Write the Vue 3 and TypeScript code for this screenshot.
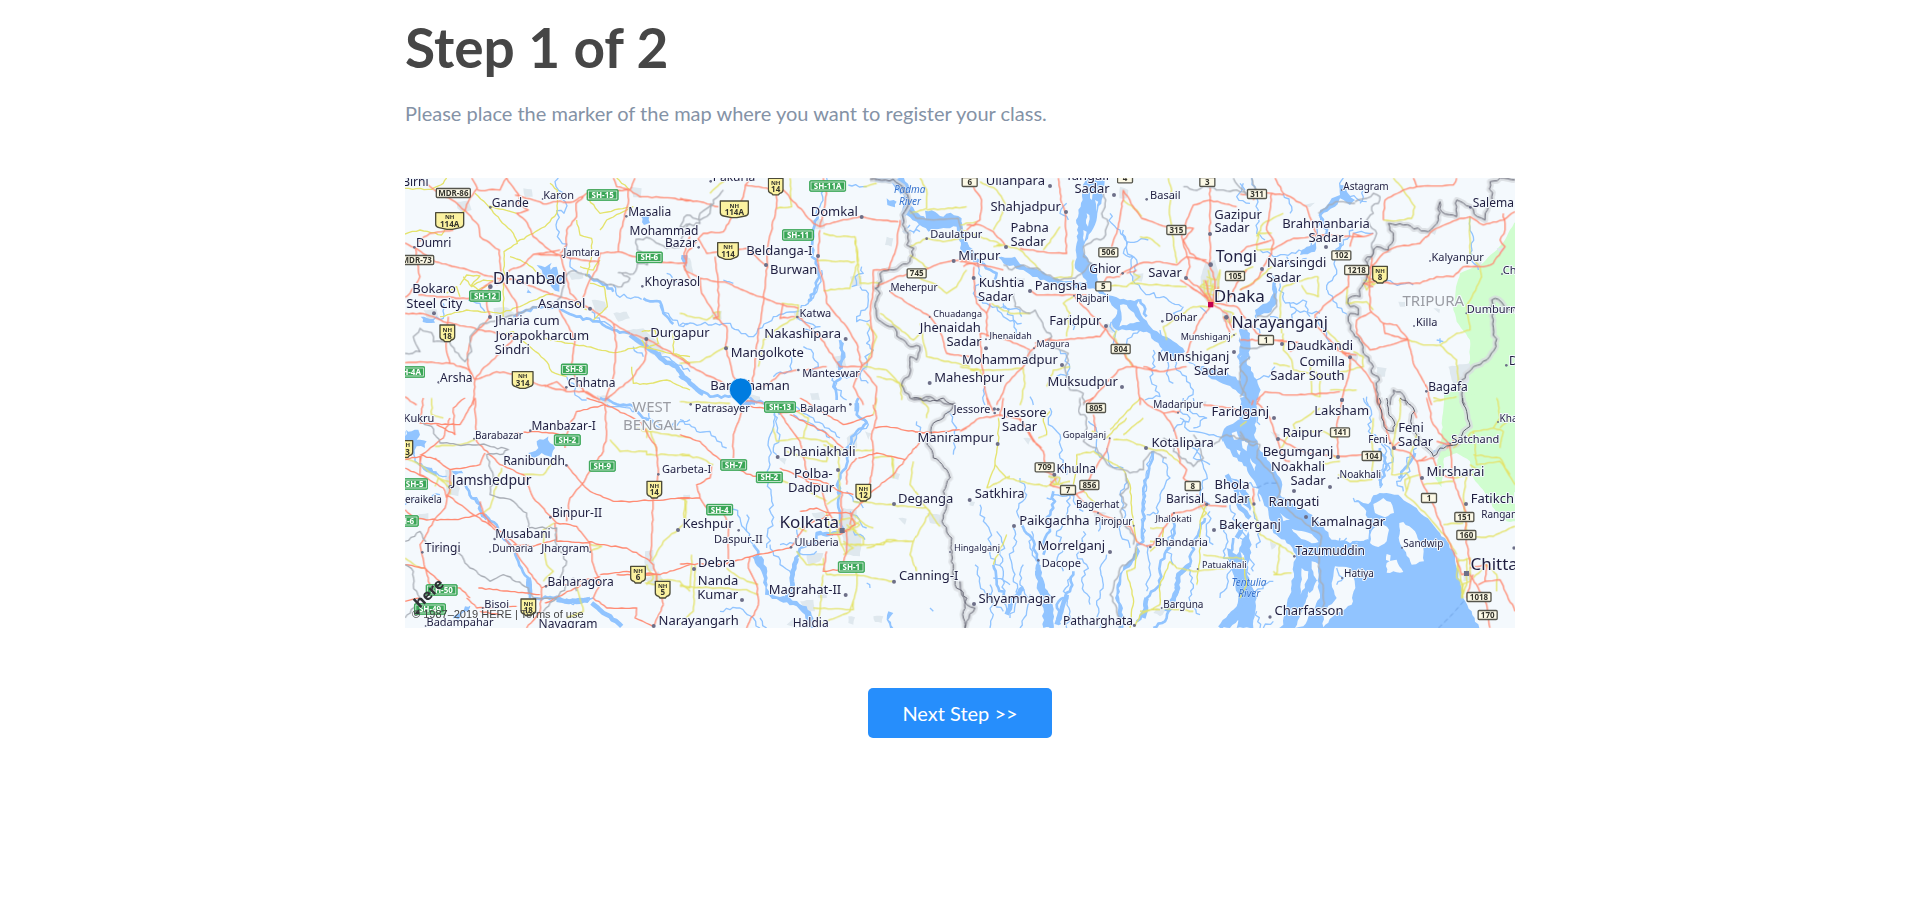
<script setup lang="ts">
type Label = [text: string, x: number, y: number, size: number, tone?: string]
type Shield = [kind: 'sh' | 'nh' | 'bx', text: string, x: number, y: number]

interface Tile {
  x: number
  y: number
  layers: Record<string, string>
  labels: Label[]
  shields: Shield[]
  dots: string
}

/* Three map units per screen pixel; lines are "x y x y ..." separated by "/". */
const tiles: Tile[] = [
  {
    x: -15,
    y: -24,
    layers: {
      urban:
        '170 95 205 92 215 120 190 130 172 115/370 55 395 58 398 80 375 82/280 415 320 412 345 430 320 450 285 445/680 480 730 475 780 520 795 550 760 555 710 520/505 310 545 305 550 325 515 330/575 390 615 395 620 420 590 430/640 430 680 425 690 445 655 455/690 50 725 55 725 85 700 82/70 420 110 418 118 445 85 448/590 675 630 678 630 700 595 698',
      water:
        '410 285 435 292 455 278 452 300 470 290 475 312 495 318 480 335 478 365 455 352 448 330 428 322 425 300/722 138 745 130 750 158 732 165/62 440 100 448 105 458 68 456/845 255 862 255 860 290 850 280/380 350 395 370 380 368',
      r1: '475 24 468 50 488 68 472 80 496 95 492 130 470 122 478 142 468 165 480 210 500 222 510 290 530 305/640 345 650 375 725 388/800 310 830 335/780 405 818 450 850 470 870 460/205 390 240 400 255 425/500 620 520 640 525 675 560 690/90 450 130 445 130 400/700 530 730 560/760 540 870 605/575 425 600 455 640 475',
      r2: '340 440 370 425 410 412 480 415 530 440 600 455 640 480 690 490/730 385 780 395 790 430 820 462/555 315 620 345 640 365',
      r3: '690 495 740 530 790 570 830 590 850 620 870 635',
      yellow:
        '15 55 95 58 130 40 140 24/225 70 268 112 300 150 340 190 352 220 312 245 310 440/268 108 350 130/560 80 600 130 690 110/530 150 540 195 575 205 575 260 560 320/352 215 400 190 435 170 470 130 472 60 450 40/15 192 60 180 125 195 150 160 195 122/120 440 200 420 300 430 360 410 420 382 460 370/180 345 200 315 240 318 215 345 235 360 262 345/190 320 215 350 250 330 285 335/300 495 340 485 390 530 440 575 455 605 500 620/430 505 560 530 640 548 720 530 810 550 870 560/570 340 612 350 622 410 580 450/725 485 765 480 775 520 740 535 725 510/695 590 700 640 740 642 800 630 870 660/330 260 380 280 440 330/820 490 820 550 840 560 870 580/650 24 690 60/540 290 580 300 600 270/140 370 170 350 180 380/700 110 620 150 600 180/530 400 560 420',
      red: '15 219 46 233 105 275 200 298 285 324 345 328 400 350 450 372 500 385 570 415 640 460 690 490 740 507 800 540 870 582/215 24 232 55 205 95 195 122 235 165 240 200 298 240 305 330 330 370 350 400 350 440/55 24 110 65 165 95 195 122/232 60 300 60 320 24 345 60 360 80 355 100 385 120 350 130 375 150 400 200 455 245 480 255/345 75 400 90 430 102 470 95 520 95 575 60 620 65 690 60 720 80 780 82 870 92/685 60 685 100 660 190 655 245/655 245 720 265 800 278 860 280/655 245 600 250 590 300 565 340 545 400/480 255 510 265 595 275/480 250 500 225 500 180 530 140 528 100 550 80/480 255 400 253 370 285 330 300 308 325 290 345/46 233 48 260 60 320 30 370 15 382/15 430 60 430 100 440 130 455 200 470 290 490 340 500/55 375 180 385 210 385 260 345 285 330/270 350 260 400 270 440 245 470 215 500 202 550 205 590 225 630 220 705/15 578 60 575 150 580 200 595 225 628 290 605 340 612 405 640 500 665 560 665 600 690/350 500 300 550 245 600 225 630/145 440 142 500 138 530 150 580/478 420 500 460 525 510 515 580 530 640 560 670 600 690/480 255 490 290 505 340 510 370 540 400 570 415/640 460 650 530 640 620 615 695/740 507 735 570 700 620 620 688/15 680 50 705/860 280 852 250 870 200/850 285 870 330/435 650 470 635 500 660/640 24 650 50 690 60 705 24/160 180 90 190 55 215/480 240 430 250 400 253',
      state: '15 550 60 545 40 500 60 475 95 488 100 515 148 515 165 545 195 575 215 545 210 500 240 465 270 455 345 435 400 410 470 400 485 370 500 315 525 302 560 315 620 345 665 350 690 325 655 308 700 312 712 280 742 285 738 260 712 240 708 208 750 205 800 235 845 230 850 195 870 160',
    },
    labels: [
      ['Birni', 46, 47, 36], ['Gande', 331, 110, 36], ['Karon', 476, 87, 33], ['Masalia', 749, 137, 36],
      ['Mohammad', 792, 194, 36], ['Bazar', 843, 230, 36], ['Jamtara', 545, 257, 30], ['Dumri', 101, 231, 36],
      ['Dhanbad', 388, 343, 51], ['Bokaro', 102, 370, 39], ['Steel City', 103, 413, 39], ['Asansol', 485, 413, 39],
      ['Jharia cum', 382, 466, 39], ['Jorapokharcum', 427, 509, 39], ['Sindri', 337, 551, 39],
      ['Khoyrasol', 817, 347, 36], ['Durgapur', 840, 502, 39], ['Arsha', 169, 635, 36], ['Chhatna', 575, 650, 36],
    ],
    shields: [
      ['bx', 'MDR-86', 160, 69], ['nh', '114A', 149, 153], ['sh', 'SH-15', 608, 75], ['sh', 'SH-6', 748, 262],
      ['bx', 'MDR-73', 50, 270], ['sh', 'SH-12', 255, 378], ['nh', '18', 142, 490], ['sh', 'SH-4A', 28, 606],
      ['nh', '314', 368, 630], ['sh', 'SH-8', 523, 598],
    ],
    dots: '271 112 4/428 87 3/679 139 4/487 258 3/43 232 4/271 350 7/102 430 6/570 416 6/270 441 6/727 349 4/739 507 6/116 637 4/499 652 4/896 232 4',
  },
  {
    x: 825,
    y: -24,
    layers: {
      urban:
        '395 150 430 148 435 175 405 178/95 425 125 422 125 448 98 450/340 425 365 415 385 440 350 450/460 560 490 555 500 590 470 595/200 670 240 680 240 700 200 700/390 670 415 668 420 690 395 690/10 260 30 265 40 310 10 300/510 320 545 318 545 350 515 345/540 575 565 580 560 600 545 600/620 200 640 205 635 230 615 225',
      water:
        '590 24 672 24 688 50 690 105 715 130 738 148 735 122 765 125 790 140 812 128 845 145 848 180 870 235 840 215 830 170 770 178 745 185 710 155 680 135 665 165 663 130 678 95 660 65 650 35/620 85 650 95 645 112 622 105/470 575 490 570 490 595 475 600/480 510 492 520 490 570 482 570/5 255 22 258 20 290 8 275/185 690 225 690 225 705 185 705',
      r1: '440 24 432 60 420 110 412 150/425 300 415 345 385 400 350 425 280 440 230 490 220 500 175 480 140 460 85 465 40 460 0 465/545 290 550 310 525 320 530 345 515 350/540 350 565 370 555 420 530 440 530 455 570 450/570 470 560 520 580 540 555 560 560 590 540 620 565 640/370 530 400 550 415 590 395 610/350 440 420 470 360 490/510 620 460 610 465 650 500 690/330 555 335 600 280 620/130 330 160 340/505 45 560 50/690 165 670 185 720 185/740 150 700 190',
      r2: '412 120 400 200 398 250 415 310 410 350 385 395/0 610 40 650 90 680 180 682/480 510 492 550 480 590 485 620 460 650 470 690',
      r3: '585 28 640 32 668 70/0 615 30 640 70 672',
      yellow:
        '145 24 105 55 90 70/330 24 335 110 290 115/430 190 470 200 525 200 535 270 510 355 430 362/412 272 525 275/525 210 540 340 600 340/690 130 740 115 740 60 720 24/740 120 860 110/690 230 740 205 790 215 870 200/600 430 650 470 700 510 720 490/705 320 760 340 800 370 830 350 860 300/720 460 740 560 870 590/100 435 80 450 0 430/305 400 355 405 350 440 300 470 250 510 235 590/0 580 60 575 120 540 145 530/550 590 620 600 660 640 665 690/590 620 640 630 670 650/0 695 150 700/100 430 120 425 118 445 100 445/550 50 590 40/690 255 745 295/560 460 590 500 560 580',
      red: '0 85 60 95 115 110/205 24 185 90 150 150 130 185 70 190 20 250 15 300 60 325 145 340 210 370 310 405 355 415/195 45 290 60 310 60 400 160 420 170 470 155 540 140 600 150 655 155/290 60 290 110 265 220 262 280 250 400 235 490 225 580 215 660 185 705/55 205 80 250 200 235 262 290/105 260 115 350 115 440 100 445/60 325 65 370 110 445 140 470 138 535 160 620 180 650/420 180 412 270 440 380 440 400 500 470 530 520 545 590 520 650 550 705/355 440 420 500 480 590 545 590/370 600 440 590/225 660 270 640 300 610 350 600/0 565 50 600 130 640 180 690 250 700/660 150 650 230 625 300 580 300 580 360 570 430 580 500 575 560 545 590/590 350 650 320 710 310 780 280 820 270 870 270/630 365 700 410 750 440 780 480 800 550 870 560/550 600 590 650 585 705/430 24 440 70 420 170/310 400 300 445 345 440',
      state: '130 60 100 90 90 130 60 150 20 135 0 170/0 170 60 160 60 130 95 100',
      border:
        '570 28 640 28 668 50 685 85 680 115 667 135 668 165 685 190 680 225 702 235 690 275 640 300 600 310 605 335 585 355 600 370 585 410 590 440 610 460 640 470 660 505 690 530 720 530 710 570 690 560 690 610 665 645 690 685 750 680 790 700 825 700',
      statew: '688 120 710 145 760 150 835 145 845 180',
    },
    labels: [
      ['Pakuria', 162, 33, 36], ['Padma', 689, 70, 30, 'river'], ['River', 690, 104, 30, 'river'], ['Domkal', 463, 137, 39],
      ['Beldanga-I', 298, 254, 39], ['Burwan', 341, 311, 39], ['Meherpur', 702, 363, 30], ['Daulatpur', 829, 204, 33],
      ['Katwa', 406, 440, 33], ['Chuadanga', 833, 440, 27], ['Jhenaidah', 811, 487, 39], ['Sadar', 852, 529, 39],
      ['Nakashipara', 368, 503, 39], ['Mangolkote', 262, 561, 39], ['Manteswar', 453, 620, 33], ['Barddhaman', 210, 661, 39],
      ['Maheshpur', 868, 636, 39],
    ],
    shields: [
      ['nh', '14', 287, 50], ['nh', '114A', 163, 118], ['sh', 'SH-11A', 443, 48], ['sh', 'SH-11', 354, 195],
      ['nh', '114', 144, 243], ['bx', '745', 710, 310],
    ],
    dots: '92 34 4/545 141 6/414 258 6/258 285 6/740 206 4/821 273 6/630 363 3/749 441 3/352 441 4/497 507 6/138 535 6/355 600 4/749 639 6',
  },
  {
    x: 1665,
    y: -24,
    layers: {
      urban:
        '735 280 765 270 780 330 775 400 745 400 720 370 722 320/785 420 815 425 815 460 790 455/480 50 505 60 500 85 478 85/160 325 195 325 192 345 165 345/520 310 550 310 545 335 520 330/440 460 465 462 460 490 440 485/200 540 220 545 225 575 205 570',
      water:
        '372 24 432 24 425 90 412 130 400 175 372 225 372 250 408 300 412 340 440 380 400 355 378 330 365 310 345 295 348 230 355 190 348 150 368 90/0 150 15 200 50 265 75 272 40 275 0 235/115 262 165 260 180 282 240 302 300 330 390 340 400 355 330 352 240 330 190 300 130 280/435 370 480 388 545 390 530 405 550 445 580 480 650 520 675 545 640 560 600 530 560 485 510 480 475 482 455 460 472 420 450 395/500 400 525 420 545 455 560 470 535 462 512 435/680 570 740 595 790 600 870 650 870 690 800 645 745 620/850 480 870 490 870 570 850 560',
      land: '392 60 400 65 396 90 390 85/380 130 388 135 384 170 378 160/405 90 415 95 408 125/480 405 500 405 540 455 510 460 478 470 485 440/370 180 380 185 372 215',
      r1: '450 130 455 160 480 180 500 215 565 210/500 215 490 250 520 260 510 300 525 340 550 365 620 385 665 410/470 440 450 470 465 500 460 520/340 480 330 440/50 270 65 330 40 370 80 400 110 410 130 440 185 460/130 400 160 450 175 500/540 480 520 490 490 540/600 480 625 530 600 550/580 540 585 590 570 620 600 680 555 690/640 560 650 600 690 640 700 660 680 690/300 540 320 560 325 620 290 620/210 680 220 705/870 560 840 580 860 610/490 180 500 240 530 270 520 310/110 410 180 420 185 440/75 650 75 705/320 100 300 130 325 150/850 40 830 80 870 100/670 410 640 430 670 450/720 410 740 430/620 570 625 620 640 640',
      r2: '60 280 110 310 100 340/540 388 560 440/850 600 835 560 860 520 860 480',
      yellow:
        '60 35 110 60 135 100 120 150 100 180/0 180 60 200 130 225 180 240 240 300/300 170 280 200 250 240/340 270 335 320 280 325/490 90 530 120 545 140/625 24 635 60 628 120 650 280/340 380 310 400 330 430 320 500/430 345 500 350 540 320 520 310/510 340 600 345 680 350/740 320 770 330 780 300 770 400 740 380 745 330 720 350 760 360/730 330 735 380 765 400 760 340/745 300 755 350 745 395/728 345 765 350 770 380 735 370/470 480 460 500 520 590/750 410 700 410 610 470 620 510/740 540 800 510 830 490/30 600 110 600 190 595 195 640 180 705/260 650 280 600 330 590/0 590 60 600 80 640/95 400 150 430 210 430/100 230 130 225 110 225/0 165 50 155/790 420 820 430 810 460 790 440/540 200 570 205 600 230',
      red: '40 50 65 90 60 150 20 180/20 165 60 165 100 185 135 225/295 24 305 100 315 125 320 250 240 245 180 235/490 60 490 80 480 140 470 190 455 230/490 60 520 110 545 145 620 170 700 175 670 210 690 250 750 285/750 50 750 190 750 285 765 330 760 400/830 110 750 90 700 105 680 150 665 200 680 250 690 290 678 325 720 355 750 400/480 315 540 280 600 275 650 285/650 285 680 260 740 270/0 275 50 280 130 300/42 290 42 330 50 400 80 430 90 400/210 360 230 375 340 375 380 375/345 380 370 410 400 440 440 480 520 590 600 605/440 470 420 500 300 510 250 510 210 545 190 590 140 640 110 705/80 500 80 430/60 490 140 510 210 540/225 520 275 505/60 490 65 580 75 660 85 705/750 410 720 450 690 520 678 555/760 405 800 430 820 480/770 400 830 410 860 450/500 590 530 590 540 705/380 705 420 660 475 600 500 590/550 590 600 605 680 590/660 330 720 370/60 290 30 280 10 290/790 440 810 490/500 310 530 300/430 340 440 322 480 320/690 350 735 380 760 405/735 330 745 370 758 400/775 350 765 400/725 360 745 385/860 300 830 340 800 400',
      state:
        '130 285 155 300 190 285 240 300 290 330 345 325 395 280 370 260 370 230 400 210 430 205 445 160 425 130 435 100 430 70/160 370 165 410 210 430 225 420 250 470 275 500 260 520 300 540 325 550 315 600 320 615 330 660 370 670 370 705/670 50 700 60 740 50 780 60 830 60 870 80/870 560 840 590 840 640 870 700/820 24 850 60 870 70',
    },
    labels: [
      ['Ullahpara', 166, 44, 39], ['Tangail', 382, 30, 39], ['Sadar', 396, 70, 39], ['Shahjadpur', 197, 122, 39],
      ['Pabna', 209, 185, 39], ['Sadar', 204, 227, 39], ['Basail', 616, 86, 33], ['Gazipur', 834, 147, 39],
      ['Sadar', 816, 187, 39], ['Tongi', 829, 276, 48], ['Ghior', 435, 309, 36], ['Savar', 615, 320, 39],
      ['Mirpur', 58, 270, 39], ['Kushtia', 125, 350, 39], ['Sadar', 107, 392, 39], ['Pangsha', 303, 360, 39],
      ['Rajbari', 397, 395, 30], ['Dhaka', 838, 397, 51], ['Faridpur', 346, 465, 39], ['Dohar', 664, 453, 33],
      ['Munshiganj', 737, 510, 27], ['Jhenaidah', 152, 506, 27], ['Magura', 279, 532, 27], ['Mohammadpur', 150, 582, 39],
      ['Munshiganj', 700, 573, 39], ['Sadar', 755, 615, 39], ['Muksudpur', 368, 648, 39],
    ],
    shields: [
      ['bx', '6', 29, 36], ['bx', '4', 495, 25], ['bx', '3', 742, 36], ['bx', '315', 649, 180], ['bx', '506', 445, 247],
      ['bx', '5', 430, 349], ['bx', '105', 825, 318], ['bx', '804', 482, 537],
    ],
    dots: '270 48 6/462 75 6/318 126 6/138 231 6/560 88 4/750 192 6/752 284 7/488 310 4/678 324 6/41 324 6/210 363 6/342 377 3/438 468 6/607 454 4/799 442 7/822 546 6/822 495 3/78 508 3/78 535 6/222 535 3/306 585 6/486 651 6',
  },
  {
    x: 2505,
    y: -24,
    layers: {
      green:
        '840 130 800 200 770 240 720 285 660 310 648 350 640 420 650 455 690 510 690 570 650 640 620 680 612 720 840 720',
      urban:
        '360 320 395 325 395 355 365 350/475 395 500 395 500 410 480 410/625 590 690 580 685 640 640 640/410 590 440 595 435 620 412 618/580 415 600 418 598 430/700 280 725 275 720 300/330 550 355 550 350 575 330 570/770 235 795 230 785 250/565 180 590 180 585 195/190 105 225 98 210 112',
      water:
        '300 45 320 50 325 75 345 90 330 105 300 85 285 110 262 125 235 138 240 120 262 105 275 85 300 75/95 310 110 325 110 400 85 430 50 440 45 420 80 400 100 370/0 470 15 480 22 530 15 565 40 610 62 660 50 705 20 705 10 640 0 620/200 230 228 215 225 245 180 255 185 240/0 500 10 520 0 560',
      r1: '130 70 155 110 150 130/35 24 45 50 55 120 50 190 75 210/310 24 300 50 330 80 380 95/60 240 100 260 200 240 230 200 240 130/140 260 150 285 200 265/340 190 400 190/340 180 310 210 285 250 290 300 260 360/120 340 130 390 170 420 240 430/150 400 200 395 210 440/262 360 290 400 325 440/230 440 260 490 280 540/50 630 95 610 105 590/690 140 700 200 690 250 715 300/400 330 460 340 520 345/370 60 360 100/60 420 45 460 60 490/590 510 610 515/600 505 600 520/380 680 385 705/0 40 15 60/90 440 140 460 170 420',
      r2: '0 480 15 540 10 600 40 650 40 705/240 130 260 190 240 200/105 330 105 390 60 425/300 215 290 260',
      yellow:
        '460 24 490 60 525 110 515 145 470 152 430 150/95 190 55 190 50 240 100 235/50 200 70 160 130 130/235 320 205 325 130 350 120 380 120 440 125 490/235 320 235 380 200 370 185 345/690 140 690 250 720 290 725 320 700 370 680 410 690 480 650 490 600 525 550 525 505 510/600 525 650 570 655 640 670 660/130 490 130 540 155 570 160 600 210 610/210 570 215 670 240 680 240 620 220 600/240 620 330 600 330 580/260 480 300 520 310 550/370 330 400 340 380 360 370 340/380 310 400 345 420 330/320 350 320 400 380 395 400 420/580 695 650 680/0 360 50 330 95 290/340 545 370 560 370 590 330 600/270 660 350 660/390 320 385 345/0 310 40 290/150 590 100 580',
      red: '105 24 130 70 200 110 230 200 260 200/0 72 50 72 95 70 130 75/95 70 90 120 80 180 100 210 95 250 70 290/95 240 160 205 240 195 370 200 400 190/370 200 340 190 330 230/430 150 435 90 490 60 530 50 640 45 650 24/530 50 520 24/400 330 380 320 385 300 430 250 470 230 540 220 580 180 660 145 690 140 730 165 790 150 825 125/790 130 795 180 780 210 795 230 760 280/400 330 450 340 540 340 590 320 640 320 670 290 730 290 760 280/395 260 388 350 390 420 430 460 435 490 505 510/395 425 350 450 350 490 390 540 430 530 505 510/430 460 470 465 505 510 520 580 560 650 575 705/70 300 40 340 0 360/325 300 325 350 260 400 225 435 230 470 310 550 330 560/0 510 60 510 130 510/330 560 330 600 305 690/330 560 370 600 400 640 415 705/50 690 75 665 150 675 260 670 300 665/310 550 350 555/0 250 20 230 95 210/105 510 180 520 150 545/30 460 50 490 90 510/400 350 370 340 430 330/40 690 35 705/290 540 330 550/40 90 50 72',
      state:
        '35 24 50 60 20 60/235 130 265 105 300 95 345 100/345 95 380 85 400 70 420 80 415 100 395 110 400 130 380 150 410 190 395 220 400 250 380 280/20 480 0 470/0 600 20 620 10 660 0 680/50 440 80 440 110 410 105 370/0 530 40 535 90 520',
      border:
        '825 30 780 24 750 35 755 80 745 110 735 150 712 140 690 110 650 90 650 140 605 125 600 95 595 150 565 185 490 165 445 160 460 200 445 240 410 230 400 250 375 270 385 310 365 350 360 380 325 385 330 410 355 415 355 435 330 430 325 455 345 500 365 520 370 550 395 580 395 610 415 620 410 650 415 705/450 705 460 660 490 675 500 705/675 705 660 640 700 590 740 570 768 530 760 450 755 390 775 388 795 420 825 425',
    },
    labels: [
      ['Astagram', 378, 60, 30], ['Salema', 760, 111, 36], ['Brahmanbaria', 258, 174, 39], ['Sadar', 258, 216, 39],
      ['Kalyanpur', 653, 273, 33], ['Narsingdi', 170, 292, 39], ['Sadar', 131, 336, 39], ['Char', 825, 312, 33],
      ['TRIPURA', 580, 409, 45, 'region'], ['Dumburnagar', 791, 430, 33], ['Killa', 560, 468, 33],
      ['Narayanganj', 119, 473, 48], ['Daudkandi', 240, 540, 39], ['Comilla', 247, 587, 39], ['Sadar South', 202, 629, 39],
      ['Bagafa', 624, 663, 36], ['D', 820, 586, 36],
    ],
    shields: [
      ['bx', '311', 51, 72], ['bx', '102', 304, 256], ['bx', '1218', 350, 300], ['nh', '8', 420, 314], ['bx', '1', 78, 510],
    ],
    dots: '306 60 3/691 112 4/258 231 6/570 273 3/66 297 6/786 312 3/679 430 3/522 468 3/126 522 6/330 562 6/559 664 4/799 586 4/306 690 6',
  },
  {
    x: -15,
    y: 660,
    layers: {
      urban:
        '135 215 160 215 160 250 180 270 175 295 140 290/735 460 760 455 765 520 735 515/850 290 870 290 870 305 850 305/55 348 85 345 85 365 58 365/730 545 775 520 790 545 760 560',
      water:
        '18 95 35 100 55 95 60 110 50 125 80 130 75 150 50 145 45 170 35 160 15 155/410 130 430 125 445 115 450 135 465 150 455 178 425 165 400 180 385 165 415 150/155 220 185 218 190 226 165 232/195 625 210 628 205 640 190 640/160 655 185 650 175 665/40 185 60 200 110 220 110 235 70 215',
      r1: '15 100 45 190 110 225 140 235/190 250 210 290 235 310 240 340/620 20 690 30 740 60 790 90 870 65/15 320 60 300 120 290/430 600 480 600 520 620 580 600/160 660 190 640 210 625/740 30 760 80 790 95 830 70',
      r2: '190 250 215 300 240 320 245 350 290 380 290 400 330 440 350 480 385 540 390 600/400 600 460 600 490 610 530 605 570 600/600 0 640 15 690 20 720 50 760 70',
      r3: '245 350 262 362/470 605 530 612 565 605/385 540 390 590/575 615 620 650 665 685',
      yellow:
        '105 145 180 140 225 125/95 0 95 50 130 60/15 180 60 200 110 235 150 270/105 265 115 240 155 255 150 290/630 125 660 160 740 160 740 170 870 170/305 210 290 260 270 330 250 345/365 230 430 230 460 190/750 95 770 160/15 480 50 505 75 510/465 375 430 395 430 440 440 500 460 520 430 550/855 300 850 380 790 430 755 490/570 460 605 445 570 440/735 530 770 530 770 560 735 555/780 545 840 550 870 580/500 660 550 640 530 560/740 90 740 120/740 500 760 540 740 560/710 90 740 100 870 120',
      red: '70 0 60 75 180 80 225 0 230 130 300 200 370 230 400 300 470 375/110 80 165 110 160 30 195 0/60 200 65 170 130 120 150 60/15 185 60 175 60 230 130 270 140 300/150 215 190 210 240 200 255 165/105 180 150 215 150 260/150 270 135 330 100 370 60 440 75 510 120 550/15 335 40 360 90 365 175 365 250 345/140 290 220 350 275 385 330 440 350 465 400 540 425 570 420 640 380 690/240 310 250 350 300 400 350 440/615 20 530 40 505 90 495 150/500 200 540 250 570 280 640 310 700 310 870 300/615 20 620 110 610 160 545 260 510 300 500 370/560 0 615 20 720 70 770 150 775 225 760 300 755 420 750 490/330 110 395 100 500 110/470 375 530 385 565 430 600 440 680 450 745 485/465 375 470 430 570 435 580 500 600 560 580 600 620 630 710 630 705 660 760 685/600 530 680 520 780 530 870 500/340 440 400 445 470 425/425 570 450 560 500 560 600 535/435 615 600 535/15 210 80 240/200 600 230 630 350 625/75 510 90 560 180 570 210 600/275 385 250 345/60 600 15 610/745 485 760 500 790 620/120 190 60 170/650 530 780 530/235 570 420 590/300 650 240 640/75 510 15 500/760 685 790 620',
      state:
        '15 60 95 85 120 135 170 140 240 140 325 155 300 170 260 170 280 235 270 290 340 310 380 345 385 390 470 390 465 430 500 490 480 540/15 430 60 400 80 440 170 460 210 510 270 550 310 530 385 570 400 600 440 600/15 500 40 520 40 560 60 600 15 660/530 580 520 540 470 600/440 600 470 600 430 640',
    },
    labels: [
      ['Kukru', 57, 72, 33], ['Barabazar', 297, 122, 30], ['Manbazar-I', 491, 95, 36], ['Ranibundh', 402, 200, 36],
      ['WEST', 755, 43, 45, 'region'], ['BENGAL', 756, 95, 45, 'region'], ['Garbeta-I', 860, 226, 33],
      ['Jamshedpur', 275, 262, 42], ['Seraikela', 62, 316, 30], ['Binpur-II', 531, 356, 36], ['Musabani', 369, 421, 36],
      ['Dumaria', 338, 462, 30], ['Jhargram', 496, 462, 33], ['Tiringi', 128, 462, 36], ['Bisoi', 290, 629, 33],
      ['Baharagora', 542, 563, 36], ['Badampahar', 180, 683, 33], ['Nayagram', 504, 690, 36], ['Narayangarh', 896, 680, 39],
    ],
    shields: [
      ['sh', 'SH-2', 502, 126], ['nh', '33', 16, 153], ['sh', 'SH-9', 607, 204], ['sh', 'SH-5', 44, 258],
      ['nh', '14', 763, 275], ['sh', 'SH-6', 16, 369], ['sh', 'SH-50', 125, 576], ['sh', 'SH-49', 90, 633],
      ['nh', '6', 714, 530], ['nh', '5', 788, 575], ['nh', '18', 385, 628],
    ],
    dots: '222 122 3/391 98 4/499 202 4/775 229 4/151 267 6/451 358 4/284 423 4/270 462 3/570 462 3/67 463 4/248 630 3/438 565 4/77 684 3/761 684 6',
  },
  {
    x: 825,
    y: 660,
    layers: {
      urban:
        '490 330 530 335 525 400 545 420 540 475 500 470 490 420 470 370/500 120 530 100 530 150 505 160/395 345 430 340 445 360 410 370/555 100 575 105 565 125/640 225 660 228 655 245 625 240/740 345 780 350 780 380 750 375/410 580 440 580 440 600 415 600/580 655 610 655 605 675 585 672/505 655 525 658 520 680 505 675/360 610 400 605 405 640 380 640/290 180 320 182 315 200/655 360 680 362 675 380/345 660 350 690 320 680/380 470 430 465 420 490 385 500',
      water:
        '215 475 245 475 262 520 260 570 290 595 330 600 380 625 400 660 400 695 385 690 375 650 350 625 300 610 255 590 248 530 225 495/625 640 640 645 625 665 640 690 630 690 620 665',
      r1: '270 30 285 60 265 130 270 200 260 230/285 40 290 80 300 110 280 150 290 170/260 230 275 310 275 370 260 450/540 60 565 80 530 110 520 140/155 320 180 360 200 400 220 440/270 440 300 500 335 530/0 65 50 100 90 100 140 150/120 640 180 630 220 660 240 690/500 280 520 310 550 330/510 340 560 390/520 400 555 425/350 395 350 440 300 440/340 50 400 80 450 120/800 40 830 90 820 170/710 70 720 100/750 630 760 640/560 555 570 570/200 350 200 400/335 20 400 60 480 120/410 460 380 470 350 460/240 660 260 690',
      r2: '535 0 530 50 560 75 530 100 500 150 500 200 475 250 480 290/410 410 440 405 460 410/220 440 235 460 225 480/475 260 480 350 490 400 450 410 410 405 410 430 360 450/190 0 250 15 290 30 300 50/360 450 345 500 335 560',
      r3: '350 480 338 520 335 570 320 600/530 15 530 40',
      yellow:
        '350 40 385 60 370 120 290 130 280 90/370 120 440 130 475 160 480 280/430 140 500 160 580 155/320 160 380 180 440 190 445 150/440 310 370 270 310 250 290 230/520 310 620 320 740 330 750 340 700 430 690 470 710 520/700 430 620 430 560 450/520 350 555 380 580 390/500 380 550 420 550 440 480 440/470 370 510 360 540 380 500 400/700 190 690 260 740 330 780 385/720 0 745 30 740 60/580 180 635 175 640 235/520 440 610 440 620 425 700 430/350 460 380 500 430 500 430 480/430 510 440 530 530 530 640 550/530 500 530 570 510 640 420 680/430 530 415 690/400 630 520 635 520 610/0 560 30 570 35 470/0 565 200 575 235 590/140 510 180 540 235 560/0 300 20 310 15 390/45 500 40 640 0 680/0 170 60 180 100 200/580 50 590 0/460 360 480 430 500 470/440 340 450 410 490 400 540 370/490 430 520 450 490 470/480 290 440 320/510 380 530 400/490 360 470 380 480 400/300 370 380 400/640 180 640 240',
      red: '300 45 330 90 360 130 375 190 380 250 420 260 440 330 450 350/185 40 160 110 160 180/0 110 60 130 100 170 160 210 220 235 280 240/0 300 60 300 50 260 90 240 95 205/580 20 590 60 575 110 580 180 575 230 550 310 520 340 510 380/585 90 620 85 730 105 840 95/720 130 680 180 640 230 590 270 560 290/535 180 590 165 675 185/500 260 500 220 530 180/485 280 485 400/450 345 520 345/450 350 480 400 500 400 500 460 490 500/0 498 130 500 230 470 330 450/210 475 205 510 230 560 235 620 200 690/130 340 145 380 145 500/360 340 410 330 450 345/60 300 80 330 145 350/360 0 490 80 580 50/330 50 430 100 490 150/380 240 440 255 480 280 520 290/330 450 380 380 450 350/440 460 430 520 480 515/390 30 350 40 300 45 250 30 200 25/300 210 380 245/510 345 525 380 480 410 440 410/700 100 730 105',
      border:
        '700 0 750 10 790 0 820 20 790 60 760 75 755 110 740 130 760 180 800 215 810 240 790 280 800 320 790 350 790 380 815 420 815 470 820 500 825 560 860 600 850 640 855 690',
      state: '695 0 720 5 750 0',
    },
    labels: [
      ['Patrasayer', 127, 42, 33], ['Balagarh', 430, 42, 33], ['Jessore', 876, 44, 33], ['Dhaniakhali', 418, 173, 39],
      ['Polba-', 400, 240, 39], ['Dadpur', 393, 283, 39], ['Deganga', 737, 314, 39], ['Kolkata', 388, 390, 51],
      ['Keshpur', 84, 391, 39], ['Daspur-II', 175, 434, 33], ['Uluberia', 410, 445, 33], ['Debra', 110, 508, 39],
      ['Nanda', 114, 560, 39], ['Kumar', 113, 602, 39], ['Magrahat-II', 375, 587, 39], ['Canning-I', 746, 547, 39],
      ['Hingalganj', 891, 460, 27], ['Haldia', 392, 688, 36], ['Manirampur', 827, 133, 39],
    ],
    shields: [
      ['sh', 'SH-13', 300, 27], ['sh', 'SH-7', 161, 201], ['sh', 'SH-2', 268, 238], ['nh', '12', 550, 284],
      ['sh', 'SH-4', 119, 335], ['sh', 'SH-1', 514, 507],
    ],
    dots: '32 19 4/511 19 4/293 177 6/474 216 6/642 318 6/176 397 4/333 448 4/42 513 6/186 606 6/497 591 6/642 551 6/810 462 3/953 138 6/-6 396 6/943 33 5',
  },
  {
    x: 1665,
    y: 660,
    layers: {
      urban:
        '265 225 300 235 305 260 275 255/400 340 440 345 420 360 402 355/590 630 620 635 600 655 580 645/715 310 745 315 740 335 715 335/190 120 215 122 205 140/30 310 45 312 40 325 28 322/725 10 740 10 735 30',
      water:
        '800 85 835 65 870 60 870 215 835 190 800 150 785 115/870 590 840 620 800 660 780 690 810 690 850 650 870 630/530 430 530 460 490 505 470 560 465 600 475 630 475 690 490 690 485 620 475 590 485 530 520 490 540 460/800 230 830 250 850 320 870 340 870 300 840 250/230 500 255 560 275 620 280 690 250 690 250 630 235 580 225 520',
      land: '815 105 830 100 838 120 822 125/845 130 855 128 858 150 848 150/830 155 842 160 838 172',
      r1: '270 30 265 80 300 110 300 180 320 230/385 70 410 100 405 160 430 180/500 240 480 290 495 340 480 400 510 450/440 150 450 200 490 210/575 160 560 220 550 300 550 430/610 180 630 240 600 290 590 350 560 350/180 240 200 290 170 340 185 380/60 320 70 370 90 400 90 470 130 520 130 590 140 640/160 390 170 430 150 480 160 540 180 600 150 660/45 500 60 560 90 600 100 650 90 690/215 400 210 450 230 490/330 290 320 350 290 400 310 440 290 490 310 520/370 400 375 450 350 470 380 500 370 560 390 620/440 470 420 510 430 560 410 620 420 690/340 530 310 580 330 640 320 690/560 440 570 520 560 580/640 390 620 440 640 500/690 130 720 170 740 230 720 290 750 320/660 60 690 100 760 110 790 130/780 370 800 420 790 480 820 500/810 320 830 380 860 400/850 430 840 480 870 530/150 560 100 540/110 400 130 440 120 500/210 590 200 640 180 690/420 370 415 400/700 0 690 40 740 60 700 90/750 340 740 400 760 440/680 500 700 560 690 620 720 650/870 480 810 520 800 570 780 600/730 130 700 180 750 200/130 640 100 620 90 560/260 300 330 290 370 340/670 0 660 40 690 60 640 100/190 500 180 560 210 600',
      r2: '185 380 215 420 230 480 235 520/280 280 280 330 260 370 270 400 250 440 250 470/340 520 330 580 290 620 300 680/640 370 640 430 600 500 600 560 560 600 550 640 530 670/735 360 700 430 690 500 650 540 650 590 620 660 580 690/550 350 550 430 530 440/100 500 110 560 140 600/820 420 810 490 830 540/580 160 555 260 550 350',
      r3: '235 500 240 560 270 600 275 690/690 500 655 530 650 580 620 640/780 690 840 620 870 580/800 230 830 280 840 330 870 360/140 650 160 600 190 570/830 420 850 380/560 600 550 660/320 590 290 680',
      yellow:
        '115 60 115 130 105 200 80 270/105 200 140 240 180 250 260 265 330 250/150 235 80 270/340 260 350 200 350 170 400 160 430 180 490 215 510 260 520 380 530 430/270 40 250 60 260 110 235 120/500 60 440 120 395 100/460 125 500 125 560 150 620 160 660 195/265 235 300 240 290 260 270 250/280 225 290 260 310 255/570 390 610 390 605 430 570 430/600 430 570 460/740 320 720 370 720 470 710 560/730 470 800 480 850 480 860 560 840 600/630 490 650 510 710 520 800 510/630 490 600 560 600 620 540 650 525 685/530 450 525 510 500 520 520 600 510 690/600 635 540 640/610 630 700 640/140 410 100 500/720 320 740 345 725 360/370 280 400 310 430 320/550 60 490 110/860 70 840 85/540 0 450 95',
      red: '0 100 60 60 100 55 120 50/120 50 180 65 230 140 250 160 255 220 285 230/120 55 130 0/80 0 100 40/180 60 220 130 245 150/290 240 270 260 300 270 320 280 350 290/340 290 370 280 400 220 440 160 450 120/350 290 400 340 450 360 510 385 530 430 560 445 580 440/540 0 570 25 610 45 640 90 650 120 660 195 680 215 670 240 710 270/610 45 660 40/730 20 810 30 870 50/710 290 740 320 700 335 640 345 600 410 580 440/740 320 800 325/400 50 405 100/0 100 20 90/640 345 600 370/370 15 400 0',
      state:
        '360 0 355 40 380 60 380 110 370 130 410 150 430 180 450 205 490 215 510 225 550 215 550 190 580 160 620 180/495 225 505 270 480 290 500 320 480 340 500 390 520 410 520 440/530 440 520 480 480 510 450 590 470 630 480 690/610 120 650 130 640 160 700 205 730 180 720 150 700 110/760 140 800 110 870 130',
      border: '0 550 5 590 20 620 45 630 20 670 15 690',
    },
    labels: [
      ['Jessore', 194, 58, 39], ['Sadar', 179, 100, 39], ['Madaripur', 654, 30, 30], ['Faridganj', 841, 53, 39],
      ['Gopalganj', 373, 120, 27], ['Kotalipara', 668, 146, 39], ['Khulna', 349, 225, 36], ['Bhola', 816, 272, 39],
      ['Sadar', 816, 314, 39], ['Barisal', 675, 315, 36], ['Satkhira', 119, 301, 39], ['Bagerhat', 413, 331, 30],
      ['Pirojpur', 461, 382, 30], ['Jhalokati', 641, 372, 27], ['Paikgachha', 283, 380, 39], ['Bakerganj', 870, 392, 39],
      ['Morrelganj', 334, 457, 39], ['Bhandaria', 664, 445, 33], ['Dacope', 304, 508, 33], ['Patuakhali', 793, 511, 27],
      ['Tentulia', 867, 563, 30, 'river'], ['River', 868, 598, 30, 'river'], ['Shyamnagar', 171, 614, 39],
      ['Barguna', 670, 629, 30], ['Patharghata', 414, 680, 36],
    ],
    shields: [
      ['bx', '805', 408, 30], ['bx', '709', 254, 208], ['bx', '856', 388, 261], ['bx', '7', 324, 276], ['bx', '8', 698, 264],
    ],
    dots: '114 34 5/104 45 4/449 121 3/558 150 6/283 230 6/29 306 6/740 319 5/414 345 3/521 383 3/642 345 3/162 384 6/762 396 6/450 462 6/571 447 4/235 487 4/713 513 3/42 618 6/605 630 3/523 682 5/654 44 3',
  },
  {
    x: 2505,
    y: 660,
    layers: {
      green:
        '612 -10 605 110 585 240 605 268 612 180 650 165 690 190 700 240 735 285 770 345 800 370 840 372 840 -10',
      water:
        '0 0 45 0 50 60 42 110 62 160 100 210 125 250 120 290 150 315 205 345 250 385 275 425 330 435 385 425 388 370 372 330 345 305 385 318 400 292 440 285 475 290 530 330 600 405 645 465 655 530 665 590 695 640 722 700 100 700 130 680 155 560 168 470 150 440 100 405 85 340 50 265 0 170/-40 450 -10 470 10 420 25 400 35 440 20 520 50 600 40 690 -10 690 -5 600 -20 520',
      land: '400 318 430 300 452 312 462 345 435 358 405 345/395 398 425 372 447 395 440 430 415 447 390 435/478 375 490 372 525 400 550 450 552 490 515 500 492 455 478 430/440 495 470 485 490 522 440 524/440 468 452 472 450 490 438 486/285 505 330 510 345 560 335 620 285 650 250 688 250 640 290 600 275 555/155 392 215 408 236 432 215 436 175 415/215 490 238 500 232 550 215 512/232 545 240 600 190 685 165 690 190 625/10 130 25 135 20 160 8 150/30 180 48 200 45 220/185 510 205 520 195 570 182 590/0 460 12 470 10 500/205 580 212 590 205 610/160 150 170 150/120 345 150 365 130 370',
      urban: '670 520 690 515 700 545 670 550/90 100 120 110 110 130/90 430 110 440 95 455/710 235 725 240',
      r1: '370 0 395 50 385 100 420 130 440 160 430 200 420 270/530 150 500 190 510 220 470 250 490 280/340 300 380 330 400 330/0 250 60 270 60 310/0 380 20 420 10 470/40 340 60 400 50 450/300 420 310 450 350 430 385 430/250 440 290 470 320 420/40 600 70 560 100 550/60 690 50 640/430 130 460 180 440 220/305 430 340 450 385 425/290 510 310 540 290 560/70 690 100 670/0 420 30 460 40 520/40 30 60 80',
      r2: '525 165 505 200 475 240/575 165 600 155 630 135/420 150 440 200 422 265',
      yellow:
        '240 30 160 80 165 100 250 100 290 120/165 100 140 120 120 160/294 230 330 250 395 245 400 180/480 0 480 50 460 130 455 230 500 225/500 225 510 240 495 290 560 350 620 420 650 470/530 110 500 215/610 5 580 0/770 0 780 60 760 90 700 100 640 150/700 100 710 200 780 190 800 220 825 260/760 90 790 100 780 150/680 230 670 300 680 400/550 260 640 250/610 380 670 375/690 420 760 415 825 385/655 480 650 540 670 560 665 600 680 560 680 480/650 490 690 480 690 550 660 560/700 230 640 240/30 300 50 360 60 410 120 440 160 470/120 440 110 530 100 520/100 530 155 525/700 540 740 500 770 530 770 580/400 60 395 120 400 160/700 170 780 180 810 230/265 160 290 180/240 200 300 190/500 280 495 245 540 230/655 500 670 600/690 200 720 220/780 90 810 60',
      red: '50 10 90 60 110 120 125 170/60 0 50 20/305 10 290 80 295 175/295 175 370 170/295 175 200 165 110 120/415 0 440 100 460 150 510 165 530 190 545 250 580 320 610 400 650 480 665 530 680 525/560 0 580 80 610 120 630 140 640 240 660 300 680 350 675 400 690 500/530 190 580 180 590 210 600 230 640 240/630 140 590 130/460 150 480 130/690 510 740 500 735 550 780 545 825 640/680 520 710 560 740 620 750 690/735 550 715 560/40 270 40 320/120 180 150 190/650 120 620 150/540 190 560 175/700 530 690 560 680 600/530 60 520 40',
      state:
        '0 110 30 140 60 140 50 180 90 220 120 280 110 300 150 340 200 380 245 415 235 470 240 530 250 580 250 640/0 100 20 130 50 130',
      border:
        '418 0 425 60 440 95 460 100 465 80 445 40 440 0/480 0 520 30 515 80 530 110 560 150 580 175 600 150 650 140 670 100 690 85 680 40 668 0',
      ferry: '595 690 640 645 675 605/50 270 80 255 110 255',
    },
    labels: [
      ['Laksham', 305, 50, 39], ['Feni', 513, 102, 39], ['Sadar', 527, 144, 39], ['Feni', 414, 135, 30],
      ['Raipur', 188, 118, 39], ['Begumganj', 174, 173, 39], ['Noakhali', 174, 220, 39], ['Sadar', 204, 262, 39],
      ['Noakhali', 361, 239, 30], ['Satchand', 706, 136, 33], ['Khag', 815, 71, 30], ['Mirsharai', 646, 235, 39],
      ['Ramgati', 162, 323, 39], ['Fatikchhari', 793, 314, 39], ['Rangamati', 800, 361, 30], ['Kamalnagar', 324, 383, 39],
      ['Sandwip', 550, 447, 30], ['Tazumuddin', 271, 472, 36], ['Hatiya', 357, 538, 30], ['Chittagong', 825, 517, 51],
      ['Charfasson', 207, 652, 39],
    ],
    shields: [
      ['bx', '141', 300, 103], ['bx', '104', 395, 174], ['bx', '1', 567, 300], ['bx', '151', 673, 357],
      ['bx', '160', 679, 411], ['bx', '1018', 717, 597], ['bx', '170', 743, 651],
    ],
    dots: '306 6 6/102 60 6/114 123 6/462 150 6/450 136 3/294 177 6/270 267 6/162 279 6/295 240 3/631 137 3/774 72 3/546 240 6/198 357 6/678 318 6/42 318 5/486 449 3/163 475 4/306 540 3/90 657 5/822 450 5',
  },
]

interface Layer {
  name: string
  closed: boolean
  sway: number
}

const layers: Layer[] = [
  { name: 'green', closed: true, sway: 2 },
  { name: 'urban', closed: true, sway: 2 },
  { name: 'water', closed: true, sway: 4 },
  { name: 'land', closed: true, sway: 3 },
  { name: 'r1', closed: false, sway: 7 },
  { name: 'r2', closed: false, sway: 5 },
  { name: 'r3', closed: false, sway: 3 },
  { name: 'halo', closed: false, sway: 5 },
  { name: 'yellow', closed: false, sway: 2 },
  { name: 'red', closed: false, sway: 2 },
  { name: 'state', closed: false, sway: 4 },
  { name: 'statew', closed: false, sway: 1 },
  { name: 'border', closed: false, sway: 5 },
  { name: 'ferry', closed: false, sway: 0 },
]

/* Splits each stretch into short steps and sways them sideways, so lines look surveyed. */
function trace(data: string, closed: boolean, sway: number): string {
  return data
    .split('/')
    .map((line) => {
      const n = line.trim().split(/\s+/).map(Number)
      const points: [number, number][] = []
      for (let i = 0; i + 1 < n.length; i += 2) points.push([n[i], n[i + 1]])
      if (closed) points.push(points[0])
      let seed = (n[0] * 31 + n[1] * 17 + 7) % 9973
      let d = `M${points[0][0]} ${points[0][1]}`
      for (let i = 1; i < points.length; i++) {
        const [ax, ay] = points[i - 1]
        const [bx, by] = points[i]
        const length = Math.hypot(bx - ax, by - ay) || 1
        const steps = Math.max(1, Math.round(length / 11))
        for (let s = 1; s <= steps; s++) {
          seed = (Math.abs(seed) * 137 + 71) % 9973
          const off = s === steps ? 0 : (seed / 9973 - 0.5) * 2 * sway
          const x = ax + ((bx - ax) * s) / steps - ((by - ay) / length) * off
          const y = ay + ((by - ay) * s) / steps + ((bx - ax) / length) * off
          d += `L${Math.round(x)} ${Math.round(y)}`
        }
      }
      return closed ? d + 'Z' : d
    })
    .join('')
}

const drawn = layers.map((layer) => ({
  name: layer.name,
  parts: tiles
    .map((t) => ({ shift: `translate(${t.x} ${t.y})`, data: t.layers[layer.name === 'halo' ? 'border' : layer.name] }))
    .filter((p) => p.data)
    .map((p) => ({ shift: p.shift, d: trace(p.data, layer.closed, layer.sway) })),
}))

const dots = tiles.flatMap((t) =>
  t.dots.split('/').map((s) => {
    const [x, y, r] = s.split(' ').map(Number)
    return { x: x + t.x, y: y + t.y, r }
  }),
)

const labels = tiles.flatMap((t) =>
  t.labels.map(([text, x, y, size, tone]) => ({ text, x: x + t.x, y: y + t.y, cls: ['s' + size, tone ?? 'town'] })),
)

const shields = tiles.flatMap((t) =>
  t.shields.map(([kind, text, x, y]) => {
    const w = kind === 'nh' ? (text.length > 3 ? 84 : text.length > 2 ? 62 : 44) : kind === 'sh' ? text.length * 15 + 18 : text.length * 15 + (text.length > 1 ? 12 : 30)
    return { kind, text, x: x + t.x, y: y + t.y, w, h: kind === 'nh' ? 50 : kind === 'sh' ? 32 : 27 }
  }),
)
</script>

<template>
  <main class="page">
    <h1>Step 1 of 2</h1>
    <p class="lead">Please place the marker of the map where you want to register your class.</p>

    <div class="map">
      <svg class="canvas" viewBox="0 0 3330 1350" preserveAspectRatio="xMidYMid slice" role="img" aria-label="Map">
        <g v-for="layer in drawn" :key="layer.name" :class="layer.name">
          <path v-for="(p, i) in layer.parts" :key="i" :d="p.d" :transform="p.shift" />
        </g>
        <g class="dots">
          <circle v-for="(c, i) in dots" :key="i" :cx="c.x" :cy="c.y" :r="c.r" />
          <rect x="1304" y="1050" width="15" height="15" />
          <rect x="3177" y="1179" width="15" height="15" />
          <rect class="capital" x="2409" y="372" width="16" height="16" />
        </g>
        <g v-for="(s, i) in shields" :key="'s' + i" :class="['shield', s.kind]" :transform="`translate(${s.x} ${s.y})`">
          <template v-if="s.kind === 'nh'">
            <path :d="`M${-s.w / 2} -25H${s.w / 2}V10Q${s.w / 2} 18 ${s.w / 2 - 10} 20L8 25H-8L${10 - s.w / 2} 20Q${-s.w / 2} 18 ${-s.w / 2} 10Z`" />
            <text y="-5" class="s18">NH</text>
            <text y="17" class="s24">{{ s.text }}</text>
          </template>
          <template v-else>
            <rect :x="-s.w / 2" :y="-s.h / 2" :width="s.w" :height="s.h" rx="3" />
            <rect v-if="s.kind === 'sh'" class="inner" :x="4 - s.w / 2" :y="4 - s.h / 2" :width="s.w - 8" :height="s.h - 8" />
            <text y="9" class="s24">{{ s.text }}</text>
          </template>
        </g>
        <g class="labels">
          <text v-for="(l, i) in labels" :key="i" :x="l.x" :y="l.y" :class="l.cls">{{ l.text }}</text>
        </g>
        <path class="pin" d="M1007 684L982 659Q973 650 973 634A34 34 0 0 1 1041 634Q1041 650 1032 659Z" />
        <g class="brand" transform="translate(44 1292) rotate(-43)">
          <path d="M-22 0H-2L-12 12Z" />
          <text x="0" y="0">here</text>
        </g>
      </svg>
      <div class="credit">© 1987–2019 HERE | <a href="#">Terms of use</a></div>
    </div>

    <button type="button" class="next">Next Step &gt;&gt;</button>
  </main>
</template>

<style>
body {
  margin: 0;
  background: #fff;
}
</style>

<style scoped>
.page {
  box-sizing: border-box;
  max-width: 1140px;
  margin: 0 auto;
  padding: 13px 15px 40px;
  display: flex;
  flex-direction: column;
  font-family: Lato, 'Liberation Sans', sans-serif;
}
h1 {
  margin: 0 0 17px;
  font-size: 55px;
  line-height: 68px;
  font-weight: 700;
  color: #464646;
}
.lead {
  margin: 0 0 50px;
  font-size: 20px;
  line-height: 30px;
  color: #8492a6;
}
.map {
  position: relative;
  height: 450px;
  overflow: hidden;
  background: #f4f9fd;
}
.canvas {
  display: block;
  width: 100%;
  height: 100%;
}
.canvas path {
  stroke-linejoin: round;
}
.green { fill: #d0fdcf; }
.urban { fill: #dfe8ee; }
.water { fill: #91c4ff; }
.land { fill: #f4f9fd; }
.r1, .r2, .r3, .halo, .yellow, .red, .state, .statew, .border, .ferry { fill: none; }
.r1, .r2, .r3 { stroke: #91c4ff; }
.r1 { stroke-width: 4px; }
.r2 { stroke-width: 8px; }
.r3 { stroke-width: 14px; }
.yellow { stroke: #e4e36c; stroke-width: 4px; }
.red { stroke: #ff8b73; stroke-width: 4px; }
.state, .statew { stroke: #a8adb5; stroke-width: 4px; }
.halo { stroke: #d8dbdf; stroke-width: 18px; opacity: 0.8; }
.border { stroke: #60606e; stroke-width: 3px; }
.ferry { stroke: #6c9fe0; stroke-width: 3px; stroke-dasharray: 15 9; }
.dots { fill: #6d6f88; }
.capital { fill: #c4004f; }

text {
  font-family: 'Noto Sans', 'Open Sans', sans-serif;
  text-anchor: middle;
}
.labels text {
  paint-order: stroke;
  stroke: #f4f9fd;
  stroke-width: 6px;
  stroke-linejoin: round;
}
.town { fill: #1f1e40; }
.labels .river { fill: #3470cc; font-style: italic; stroke-width: 1px; }
.labels .region { fill: #9a9ca3; }
.s18 { font-size: 18px; }
.s24 { font-size: 24px; }
.s27 { font-size: 27px; }
.s30 { font-size: 30px; }
.s33 { font-size: 33px; }
.s36 { font-size: 36px; }
.s39 { font-size: 39px; }
.s42 { font-size: 42px; }
.s45 { font-size: 45px; }
.s48 { font-size: 48px; }
.s51 { font-size: 51px; }

.shield text { font-weight: 700; fill: #33332c; }
.bx rect { fill: #fcf9e6; stroke: #55554c; stroke-width: 4px; }
.nh path { fill: #fbf2a0; stroke: #4c4b38; stroke-width: 4px; }
.sh rect { fill: #3aa657; stroke: #3aa657; stroke-width: 3px; }
.sh .inner { fill: none; stroke: #fff; stroke-width: 2px; }
.sh text { fill: #fff; }

.pin { fill: #007ce0; stroke: #fff; stroke-width: 2px; }
.brand { fill: #2f3136; }
.brand text { font-size: 45px; font-weight: 800; text-anchor: start; }

.credit {
  position: absolute;
  left: 7px;
  bottom: 7px;
  font: 11px/13px 'Liberation Sans', Arial, sans-serif;
  color: #444;
}
.credit a {
  color: inherit;
  text-decoration: none;
}
.next {
  align-self: center;
  margin-top: 60px;
  padding: 10px 34px;
  border: 0;
  border-radius: 5px;
  background: #268efc;
  color: #fff;
  font: 20px/30px Lato, 'Liberation Sans', sans-serif;
  cursor: pointer;
}
</style>
